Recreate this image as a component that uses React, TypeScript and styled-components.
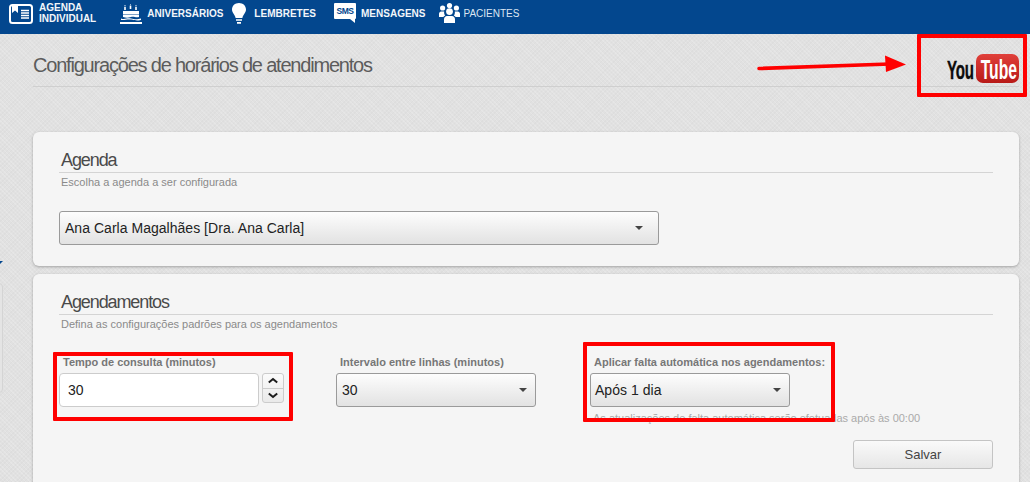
import React from "react";
import styled, { createGlobalStyle } from "styled-components";

const Global = createGlobalStyle`
  html, body { margin: 0; padding: 0; height: 100%; overflow: hidden; }
  body {
    font-family: "Liberation Sans", Arial, sans-serif;
    background-color: #e1e1e1;
    background-image:
      repeating-linear-gradient(45deg, rgba(255,255,255,.16) 0 1px, transparent 1px 3px),
      repeating-linear-gradient(-45deg, rgba(0,0,0,.018) 0 1px, transparent 1px 3px);
  }
`;

const Page = styled.div`
  position: relative;
  width: 1030px;
  height: 482px;
  overflow: hidden;
`;

const TopBar = styled.nav`
  height: 34px;
  background: #03478e;
  display: flex;
  align-items: flex-start;
  padding-left: 9px;
  box-sizing: border-box;
`;

const NavItem = styled.div<{ $ml?: number; $gap?: number }>`
  display: flex;
  align-items: center;
  height: 26px;
  margin-left: ${(p) => p.$ml ?? 0}px;
  gap: ${(p) => p.$gap ?? 5}px;
  color: #fff;
  svg { display: block; flex: none; }
`;

const NavLabel = styled.span<{ $light?: boolean }>`
  font-size: 10px;
  line-height: 11px;
  font-weight: ${(p) => (p.$light ? 400 : 700)};
  color: ${(p) => (p.$light ? "#dbe6f2" : "#f2f6fa")};
`;

const Header = styled.header`
  margin: 0 11px 0 33px;
  height: 52px;
  border-bottom: 1px solid #cfcfcf;
  display: flex;
  align-items: center;
`;

const Title = styled.h1`
  margin: 10px 0 0;
  font-size: 20px;
  font-weight: 400;
  letter-spacing: -1.2px;
  color: #5c5c5c;
`;

const Cards = styled.main`
  margin: 45px 11px 0 33px;
  display: flex;
  flex-direction: column;
  gap: 8px;
`;

const Card = styled.section<{ $h: number }>`
  height: ${(p) => p.$h}px;
  box-sizing: border-box;
  background: #f5f5f5;
  border-radius: 6px;
  box-shadow: 0 1px 3px rgba(0, 0, 0, 0.28);
  padding: 17px 26px 0;
`;

const CardTitle = styled.h2`
  margin: 0;
  padding: 0 2px 1px;
  font-size: 18px;
  line-height: 22px;
  font-weight: 400;
  letter-spacing: -1.1px;
  color: #4a4a4a;
  border-bottom: 1px solid #d4d4d4;
`;

const CardSub = styled.p`
  margin: 3px 0 0 2px;
  font-size: 11px;
  line-height: 13px;
  color: #8a8a8a;
`;

const SelectBox = styled.div<{ $w: number; $pl?: number; $pr?: number }>`
  width: ${(p) => p.$w}px;
  height: 34px;
  box-sizing: border-box;
  display: flex;
  align-items: center;
  justify-content: space-between;
  padding: 0 ${(p) => p.$pr ?? 8}px 0 ${(p) => p.$pl ?? 5}px;
  border: 1px solid #9a9a9a;
  border-radius: 3px;
  background: linear-gradient(#fdfdfd, #e2e2e2);
  font-size: 14px;
  letter-spacing: 0.03px;
  color: #222;
  &::after {
    content: "";
    border-left: 4px solid transparent;
    border-right: 4px solid transparent;
    border-top: 4px solid #444;
  }
`;

const AgendaSelect = styled.div`
  margin-top: 22px;
`;

const FormRow = styled.div`
  margin-top: 25px;
  display: grid;
  grid-template-columns: 277px 254px 1fr;
`;

const Field = styled.div`
  display: flex;
  flex-direction: column;
`;

const FieldLabel = styled.label`
  font-size: 11px;
  line-height: 13px;
  font-weight: 700;
  color: #777;
  margin: 0 0 4px 4px;
`;

const NumberRow = styled.div`
  display: flex;
  gap: 3px;
`;

const NumberInput = styled.div`
  width: 200px;
  height: 34px;
  box-sizing: border-box;
  display: flex;
  align-items: center;
  padding-left: 8px;
  background: #fff;
  border: 1px solid #ccc;
  border-radius: 4px;
  font-size: 14px;
  color: #222;
`;

const Spinner = styled.div`
  width: 22px;
  height: 30px;
  box-sizing: border-box;
  display: flex;
  flex-direction: column;
  border: 1px solid #ccc;
  border-radius: 3px;
  background: linear-gradient(#fbfbfb, #eaeaea);
`;

const SpinButton = styled.div`
  flex: 1;
  display: flex;
  align-items: center;
  justify-content: center;
  & + & { border-top: 1px solid #ccc; }
  svg { display: block; }
`;

const Help = styled.p`
  margin: 5px 0 0 3px;
  font-size: 11px;
  line-height: 13px;
  color: #aaa;
  white-space: nowrap;
`;

const Actions = styled.div`
  margin-top: 15px;
  display: flex;
  justify-content: flex-end;
`;

const SaveButton = styled.button`
  width: 140px;
  height: 29px;
  border: 1px solid #c4c4c4;
  border-radius: 3px;
  background: linear-gradient(#fafafa, #e6e6e6);
  font-family: inherit;
  font-size: 13px;
  color: #444;
`;

const RedBox = styled.div<{ $x: number; $y: number; $w: number; $h: number }>`
  position: absolute;
  left: ${(p) => p.$x}px;
  top: ${(p) => p.$y}px;
  width: ${(p) => p.$w}px;
  height: ${(p) => p.$h}px;
  box-sizing: border-box;
  border: 4px solid #f00;
  border-radius: 1px;
  pointer-events: none;
`;

const Arrow = styled.svg`
  position: absolute;
  left: 755px;
  top: 52px;
`;

const YouTube = styled.div`
  position: absolute;
  left: 947px;
  top: 54px;
  width: 72px;
  height: 29px;
  display: flex;
  align-items: center;
`;

const You = styled.span`
  width: 29px;
  flex: none;
  font-size: 26px;
  font-weight: 700;
  letter-spacing: -0.3px;
  color: #0c0c0c;
  transform: scaleX(0.58);
  transform-origin: left center;
  white-space: nowrap;
  line-height: 29px;
  margin-top: 3px;
  -webkit-text-stroke: 0.4px #0c0c0c;
`;

const Tube = styled.span`
  width: 43px;
  height: 29px;
  flex: none;
  border-radius: 7px;
  background: linear-gradient(#e0403a, #b81a18);
  color: #fff;
  font-size: 28px;
  font-weight: 700;
  line-height: 31px;
  text-indent: 3px;
  white-space: nowrap;
  span { display: inline-block; transform: scaleX(0.56); transform-origin: left center; }
`;

const SideStub = styled.div`
  position: absolute;
  left: -8px;
  top: 283px;
  width: 11px;
  height: 110px;
  box-sizing: border-box;
  border: 1px solid #d4d4d4;
  border-radius: 4px;
  background: #e4e4e4;
`;

const SideMark = styled.div`
  position: absolute;
  left: 0;
  top: 261px;
  width: 0;
  height: 0;
  border-top: 3px solid #03478e;
  border-right: 3px solid transparent;
`;

const AgendaIcon = () => (
  <svg width="24" height="20" viewBox="0 0 24 20" style={{ marginTop: 1 }}>
    <rect x="1" y="1" width="22" height="18" rx="2.5" fill="none" stroke="#fff" strokeWidth="2" />
    <path d="M3 2h6v7l-3-2.5L3 9z" fill="#fff" />
    <path d="M12 6.5h8M12 9h8M12 11.5h8M12 14h8" stroke="#fff" strokeWidth="1.3" />
  </svg>
);

const CakeIcon = () => (
  <svg width="22" height="20" viewBox="0 0 22 20" style={{ marginTop: 1 }}>
    <path d="M5 6V3M10.5 5V2M16 6V3" stroke="#fff" strokeWidth="1.6" />
    <path d="M5 0.8l.9 1.4H4.1zM10.5 0l.9 1.4H9.6zM16 0.8l.9 1.4h-1.8z" fill="#fff" />
    <path d="M3 7h16v3H3z" fill="#fff" />
    <path d="M3 10.5h16v2.5c-3 1.2-5-1-8 0s-5 1-8 0z" fill="#fff" />
    <path d="M1 14.5c4 1.5 6-1 10 0s6 1 10 0v1.5c-4 1-6 .4-10-.4s-6 1-10 .4z" fill="#fff" />
    <path d="M0 18h22v2H0z" fill="#fff" />
  </svg>
);

const BulbIcon = () => (
  <svg width="14" height="21" viewBox="0 0 14 21">
    <path d="M7 0C3 0 0 2.8 0 6.6c0 3.4 3 5 3.6 8.4h6.8C11 11.6 14 10 14 6.6 14 2.8 11 0 7 0z" fill="#fff" />
    <path d="M4 16.2h6v1.6H4zM5 19h4v1.8H5z" fill="#fff" />
  </svg>
);

const SmsIcon = () => (
  <svg width="22" height="20" viewBox="0 0 22 20">
    <path d="M1 0h20a1 1 0 0 1 1 1v14a1 1 0 0 1-1 1v4l-5-4H1a1 1 0 0 1-1-1V1a1 1 0 0 1 1-1z" fill="#fff" />
    <text x="11" y="11" textAnchor="middle" fontFamily="Liberation Sans, sans-serif" fontWeight="700" fontSize="8.5" letterSpacing="-0.4" fill="#03478e">SMS</text>
  </svg>
);

const PeopleIcon = () => (
  <svg width="21" height="20" viewBox="0 0 21 20">
    <circle cx="3.6" cy="5" r="2.6" fill="#fff" />
    <circle cx="17.4" cy="5" r="2.6" fill="#fff" />
    <circle cx="10.5" cy="2.6" r="2.6" fill="#fff" />
    <circle cx="10.5" cy="8.6" r="3.4" fill="#fff" />
    <path d="M0 14v-3.2C0 9.4 1 8.4 2.2 8.4h3c-.4 2 .4 3.2 1 4.2-1 .3-1.6.9-1.8 1.4z" fill="#fff" />
    <path d="M21 14v-3.2c0-1.4-1-2.4-2.2-2.4h-3c.4 2-.4 3.2-1 4.2 1 .3 1.6.9 1.8 1.4z" fill="#fff" />
    <path d="M5 20v-3.6C5 14.4 6.4 13 8 13h5c1.6 0 3 1.4 3 3.4V20z" fill="#fff" />
  </svg>
);

const Chevron = ({ up }: { up?: boolean }) => (
  <svg width="12" height="7" viewBox="0 0 12 7">
    <path d={up ? "M1.8 5.6L6 2l4.2 3.6" : "M1.8 1.4L6 5l4.2-3.6"} fill="none" stroke="#1c1c1c" strokeWidth="2" />
  </svg>
);

export default function App() {
  return (
    <Page>
      <Global />
      <TopBar>
        <NavItem $gap={6}>
          <AgendaIcon />
          <NavLabel>AGENDA<br />INDIVIDUAL</NavLabel>
        </NavItem>
        <NavItem $ml={24} $gap={5}>
          <CakeIcon />
          <NavLabel>ANIVERSÁRIOS</NavLabel>
        </NavItem>
        <NavItem $ml={9} $gap={8}>
          <BulbIcon />
          <NavLabel>LEMBRETES</NavLabel>
        </NavItem>
        <NavItem $ml={18}>
          <SmsIcon />
          <NavLabel>MENSAGENS</NavLabel>
        </NavItem>
        <NavItem $ml={14} $gap={3}>
          <PeopleIcon />
          <NavLabel $light>PACIENTES</NavLabel>
        </NavItem>
      </TopBar>

      <Header>
        <Title>Configurações de horários de atendimentos</Title>
      </Header>

      <Cards>
        <Card $h={134}>
          <CardTitle>Agenda</CardTitle>
          <CardSub>Escolha a agenda a ser configurada</CardSub>
          <AgendaSelect>
            <SelectBox $w={600} $pr={15}>Ana Carla Magalhães [Dra. Ana Carla]</SelectBox>
          </AgendaSelect>
        </Card>
        <Card $h={260}>
          <CardTitle>Agendamentos</CardTitle>
          <CardSub>Defina as configurações padrões para os agendamentos</CardSub>
          <FormRow>
            <Field>
              <FieldLabel>Tempo de consulta (minutos)</FieldLabel>
              <NumberRow>
                <NumberInput>30</NumberInput>
                <Spinner>
                  <SpinButton><Chevron up /></SpinButton>
                  <SpinButton><Chevron /></SpinButton>
                </Spinner>
              </NumberRow>
            </Field>
            <Field>
              <FieldLabel>Intervalo entre linhas (minutos)</FieldLabel>
              <SelectBox $w={200}>30</SelectBox>
            </Field>
            <Field>
              <FieldLabel>Aplicar falta automática nos agendamentos:</FieldLabel>
              <SelectBox $w={200} $pl={4}>Após 1 dia</SelectBox>
              <Help>As atualizações de falta automática serão efetuadas após às 00:00</Help>
            </Field>
          </FormRow>
          <Actions>
            <SaveButton>Salvar</SaveButton>
          </Actions>
        </Card>
      </Cards>

      <SideMark />
      <SideStub />

      <YouTube>
        <You>You</You>
        <Tube><span>Tube</span></Tube>
      </YouTube>

      <Arrow width="155" height="24" viewBox="0 0 155 24">
        <path d="M4 16.5L135 12" stroke="#f00" strokeWidth="3.6" strokeLinecap="round" />
        <path d="M130 3.5L151 12.5 131 20z" fill="#f00" />
      </Arrow>

      <RedBox $x={917} $y={34} $w={110} $h={63} />
      <RedBox $x={53} $y={352} $w={240} $h={69} />
      <RedBox $x={583} $y={342} $w={252} $h={80} />
    </Page>
  );
}
